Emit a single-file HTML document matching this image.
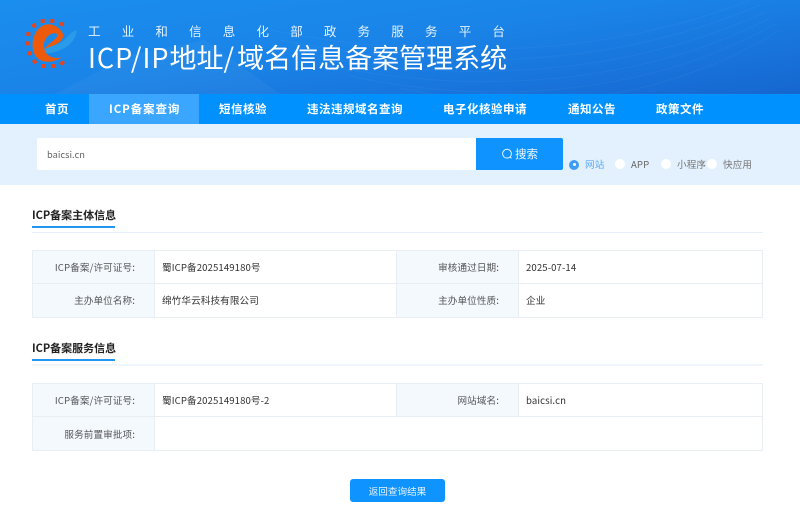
<!DOCTYPE html>
<html lang="zh"><head><meta charset="utf-8"><style>
*{box-sizing:border-box;margin:0;padding:0}
html,body{width:800px;height:509px;overflow:hidden;background:#fff}
body{position:relative;font-family:"Noto Sans CJK SC","Liberation Sans",sans-serif;font-size:11px;color:#444}
.a{position:absolute;white-space:nowrap}
#hd{left:0;top:0;width:800px;height:94px;background:linear-gradient(172deg,#1a8eee 0%,#1a84e8 45%,#1667d0 100%);overflow:hidden}
#nav{left:0;top:94px;width:800px;height:30px;background:#0091ff}
#act{left:89px;top:94px;width:110px;height:30px;background:#3ba6ff}
.n{top:94px;height:30px;line-height:30px;color:#fff;font-weight:700;font-size:11.5px;letter-spacing:.5px}
#band{left:0;top:124px;width:800px;height:61px;background:#e3f1fe}
.ti{font-weight:700;font-size:11px;color:#222;left:32px;line-height:16px}
.ul{left:32px;width:83px;height:2px;background:#2196f3}
.ln{left:32px;width:731px;height:1px;background:#e6eff7}
.lb{background:#f4f9fe}
.bx{border:1px solid #e8eef4}
.v{background:#e8eef4}
.t{line-height:16px;font-size:9.6px;color:#333;letter-spacing:.1px}
.r{text-align:right;color:#555}
.rd{width:10px;height:10px;border-radius:50%;background:#fff;top:159px}
</style></head><body>
<div class="a" id="hd">
<svg width="800" height="94" style="position:absolute;left:0;top:0" fill="none">
<path d="M55 94 L130 55 L205 40 L280 94Z" fill="#fff" opacity=".035"/>
<g stroke="#fff" opacity=".03"><path d="M270 30C420 60 600 60 750 0"/><path d="M280 40C430 72 610 70 760 5"/><path d="M300 52C440 84 620 80 765 12"/><path d="M320 64C460 94 630 90 770 18"/><path d="M350 76C480 104 640 100 775 24"/><path d="M400 88C510 112 650 110 780 30"/></g>
</svg>
<svg width="70" height="70" viewBox="0 0 210 210" style="position:absolute;left:15px;top:10px">
<g fill="#e8441c">
<rect x="51" y="41" width="12" height="12" transform="rotate(-35 57 47)"/>
<rect x="77" y="27" width="12" height="12"/><rect x="106" y="27" width="12" height="12"/>
<rect x="134" y="36" width="12" height="12" transform="rotate(35 140 42)"/>
<rect x="34" y="66" width="12" height="12"/><rect x="30" y="94" width="12" height="12"/>
<rect x="36" y="124" width="12" height="12"/><rect x="53" y="149" width="12" height="12" transform="rotate(-30 59 155)"/>
<rect x="79" y="162" width="12" height="12"/><rect x="109" y="162" width="12" height="12"/>
<rect x="136" y="153" width="12" height="12" transform="rotate(20 142 159)"/>
</g>
</svg>
<svg width="50" height="50" viewBox="0 0 150 150" style="position:absolute;left:30px;top:18px">
<path d="M38 100C45 80 70 88 95 72C110 62 120 42 140 36C140 55 125 80 100 92C80 102 50 112 38 100Z" fill="#2a9be8"/>
<path d="M100 50C90 25 60 10 36 24C10 40 3 75 11 102C20 132 58 142 95 118C72 124 50 116 43 95C37 72 50 52 66 47C77 44 84 47 81 55C76 65 60 74 40 95C62 84 100 78 100 50Z" fill="#ee5a0c"/>
</svg>
<div class="a" style="left:88px;top:22px;font-size:12.5px;line-height:18px;letter-spacing:21.2px;color:#e4f2ff">工业和信息化部政务服务平台</div>
<div class="a" style="left:88px;top:38px;font-size:27px;line-height:38px;color:#fff"><span style="letter-spacing:1px">ICP/IP</span>地址<span style="letter-spacing:3px">/</span>域名信息备案管理系统</div>
</div>
<div class="a" id="nav"></div><div class="a" id="act"></div>
<div class="a n" style="left:45px">首页</div>
<div class="a n" style="left:109px;letter-spacing:.9px">ICP备案查询</div>
<div class="a n" style="left:219px">短信核验</div>
<div class="a n" style="left:307px">违法违规域名查询</div>
<div class="a n" style="left:443px">电子化核验申请</div>
<div class="a n" style="left:568px">通知公告</div>
<div class="a n" style="left:656px">政策文件</div>
<div class="a" id="band"></div>
<div class="a" style="left:37px;top:138px;width:440px;height:32px;background:#fff;border-radius:2px 0 0 2px"></div>
<div class="a" style="left:47px;top:146px;line-height:16px;font-size:9.3px;color:#666">baicsi.cn</div>
<div class="a" style="left:476px;top:138px;width:87px;height:32px;background:#0f94ff;border-radius:0 2px 2px 0"></div>
<svg class="a" style="left:501px;top:148px" width="12" height="12" fill="none" stroke="#e8f4ff" stroke-width="1"><circle cx="6" cy="5.7" r="4.4"/><path d="M9.2 9L10.5 10.3"/></svg>
<div class="a" style="left:515px;top:146px;line-height:16px;font-size:11.5px;color:#f0f8ff">搜索</div>
<div class="a" style="left:569px;top:159.5px;width:10px;height:10px;border-radius:50%;background:#3f9df5"></div>
<div class="a" style="left:572.5px;top:163px;width:3px;height:3px;border-radius:50%;background:#fff"></div>
<div class="a t" style="left:585px;top:156px;color:#5aa9f8">网站</div>
<div class="a rd" style="left:615px"></div>
<div class="a t" style="left:631px;top:156px;color:#666">APP</div>
<div class="a rd" style="left:661px"></div>
<div class="a t" style="left:677px;top:156px;color:#777">小程序</div>
<div class="a rd" style="left:707px"></div>
<div class="a t" style="left:723px;top:156px;color:#777">快应用</div>

<div class="a ti" style="top:207px">ICP备案主体信息</div>
<div class="a ul" style="top:226px"></div>
<div class="a ln" style="top:232px"></div>
<div class="a bx" style="left:32px;top:250px;width:731px;height:68px"></div>
<div class="a lb" style="left:33px;top:251px;width:121px;height:66px"></div>
<div class="a lb" style="left:397px;top:251px;width:121px;height:66px"></div>
<div class="a v" style="left:154px;top:250px;width:1px;height:68px"></div>
<div class="a v" style="left:396px;top:250px;width:1px;height:68px"></div>
<div class="a v" style="left:518px;top:250px;width:1px;height:68px"></div>
<div class="a v" style="left:32px;top:283px;width:731px;height:1px"></div>
<div class="a t r" style="left:32px;width:103px;top:259px">ICP备案/许可证号:</div>
<div class="a t" style="left:162px;top:259px">蜀ICP备2025149180号</div>
<div class="a t r" style="left:396px;width:103px;top:259px">审核通过日期:</div>
<div class="a t" style="left:526px;top:259px">2025-07-14</div>
<div class="a t r" style="left:32px;width:103px;top:292px">主办单位名称:</div>
<div class="a t" style="left:162px;top:292px">绵竹华云科技有限公司</div>
<div class="a t r" style="left:396px;width:103px;top:292px">主办单位性质:</div>
<div class="a t" style="left:526px;top:292px">企业</div>

<div class="a ti" style="top:340px">ICP备案服务信息</div>
<div class="a ul" style="top:359px"></div>
<div class="a ln" style="top:364px;height:2px;background:#f0f6fb"></div>
<div class="a bx" style="left:32px;top:383px;width:731px;height:68px"></div>
<div class="a lb" style="left:33px;top:384px;width:121px;height:66px"></div>
<div class="a lb" style="left:397px;top:384px;width:121px;height:32px"></div>
<div class="a v" style="left:154px;top:383px;width:1px;height:68px"></div>
<div class="a v" style="left:396px;top:383px;width:1px;height:33px"></div>
<div class="a v" style="left:518px;top:383px;width:1px;height:33px"></div>
<div class="a v" style="left:32px;top:416px;width:731px;height:1px"></div>
<div class="a t r" style="left:32px;width:103px;top:392px">ICP备案/许可证号:</div>
<div class="a t" style="left:162px;top:392px">蜀ICP备2025149180号-2</div>
<div class="a t r" style="left:396px;width:103px;top:392px">网站域名:</div>
<div class="a t" style="left:526px;top:392px">baicsi.cn</div>
<div class="a t r" style="left:32px;width:103px;top:426px">服务前置审批项:</div>

<div class="a" style="left:350px;top:479px;width:95px;height:23px;background:#0f94ff;border-radius:3px"></div>
<div class="a" style="left:350px;top:483px;width:95px;text-align:center;line-height:16px;font-size:9.6px;color:#e4f2ff">返回查询结果</div>
</body></html>
